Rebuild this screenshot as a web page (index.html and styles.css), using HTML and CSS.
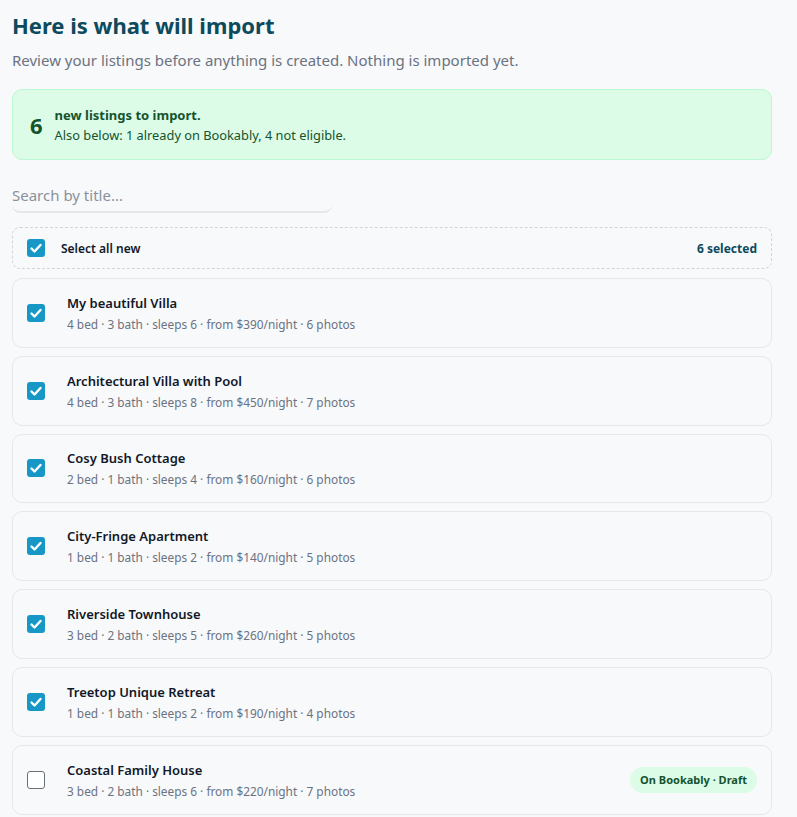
FILE: index.html
```html
<!DOCTYPE html>
<html>
<head>
<meta charset="utf-8">
<link rel="stylesheet" href="styles.css">
</head>
<body>
<main class="page">
  <h1 class="title">Here is what will import</h1>
  <p class="lead">Review your listings before anything is created. Nothing is imported yet.</p>

  <section class="summary">
    <div class="summary-count">6</div>
    <div class="summary-text">
      <div class="summary-main">new listings to import.</div>
      <div class="summary-sub">Also below: 1 already on Bookably, 4 not eligible.</div>
    </div>
  </section>

  <div class="search-wrap">
    <input class="search" type="text" placeholder="Search by title...">
  </div>

  <div class="select-all">
    <span class="cb checked"><svg viewBox="0 0 18 18"><path d="M4.5 9.5l3 3 6-6.5" fill="none" stroke="#fff" stroke-width="2.4" stroke-linecap="round" stroke-linejoin="round"/></svg></span>
    <span class="select-label">Select all new</span>
    <span class="select-count">6 selected</span>
  </div>

  <ul class="list">
    <li class="card">
      <span class="cb checked"><svg viewBox="0 0 18 18"><path d="M4.5 9.5l3 3 6-6.5" fill="none" stroke="#fff" stroke-width="2.4" stroke-linecap="round" stroke-linejoin="round"/></svg></span>
      <div class="info"><div class="name">My beautiful Villa</div><div class="meta">4 bed · 3 bath · sleeps 6 · from $390/night · 6 photos</div></div>
    </li>
    <li class="card">
      <span class="cb checked"><svg viewBox="0 0 18 18"><path d="M4.5 9.5l3 3 6-6.5" fill="none" stroke="#fff" stroke-width="2.4" stroke-linecap="round" stroke-linejoin="round"/></svg></span>
      <div class="info"><div class="name">Architectural Villa with Pool</div><div class="meta">4 bed · 3 bath · sleeps 8 · from $450/night · 7 photos</div></div>
    </li>
    <li class="card">
      <span class="cb checked"><svg viewBox="0 0 18 18"><path d="M4.5 9.5l3 3 6-6.5" fill="none" stroke="#fff" stroke-width="2.4" stroke-linecap="round" stroke-linejoin="round"/></svg></span>
      <div class="info"><div class="name">Cosy Bush Cottage</div><div class="meta">2 bed · 1 bath · sleeps 4 · from $160/night · 6 photos</div></div>
    </li>
    <li class="card">
      <span class="cb checked"><svg viewBox="0 0 18 18"><path d="M4.5 9.5l3 3 6-6.5" fill="none" stroke="#fff" stroke-width="2.4" stroke-linecap="round" stroke-linejoin="round"/></svg></span>
      <div class="info"><div class="name">City-Fringe Apartment</div><div class="meta">1 bed · 1 bath · sleeps 2 · from $140/night · 5 photos</div></div>
    </li>
    <li class="card">
      <span class="cb checked"><svg viewBox="0 0 18 18"><path d="M4.5 9.5l3 3 6-6.5" fill="none" stroke="#fff" stroke-width="2.4" stroke-linecap="round" stroke-linejoin="round"/></svg></span>
      <div class="info"><div class="name">Riverside Townhouse</div><div class="meta">3 bed · 2 bath · sleeps 5 · from $260/night · 5 photos</div></div>
    </li>
    <li class="card">
      <span class="cb checked"><svg viewBox="0 0 18 18"><path d="M4.5 9.5l3 3 6-6.5" fill="none" stroke="#fff" stroke-width="2.4" stroke-linecap="round" stroke-linejoin="round"/></svg></span>
      <div class="info"><div class="name">Treetop Unique Retreat</div><div class="meta">1 bed · 1 bath · sleeps 2 · from $190/night · 4 photos</div></div>
    </li>
    <li class="card">
      <span class="cb"></span>
      <div class="info"><div class="name">Coastal Family House</div><div class="meta">3 bed · 2 bath · sleeps 6 · from $220/night · 7 photos</div></div>
      <span class="badge">On Bookably · Draft</span>
    </li>
  </ul>
</main>
</body>
</html>
```

FILE: styles.css
```css
* { box-sizing: border-box; }
html, body { margin: 0; padding: 0; background: #f8f9fb; }
body {
  font-family: "Noto Sans", "Open Sans", sans-serif;
  color: #111827;
}
.page {
  width: 760px;
  margin: 0 0 0 12px;
  padding-top: 10px;
}
.title {
  margin: 0;
  font-size: 22px;
  line-height: 30px;
  font-weight: 700;
  color: #0c4a5c;
}
.lead {
  margin: 9px 0 0;
  font-size: 15px;
  line-height: 22px;
  color: #6b7280;
}
.summary {
  margin-top: 18px;
  height: 71px;
  display: flex;
  align-items: center;
  gap: 12px;
  padding: 0 17px;
  background: #dcfce7;
  border: 1px solid #bbf7d0;
  border-radius: 10px;
  color: #14532d;
}
.summary-count {
  font-size: 22px;
  font-weight: 700;
  line-height: 1;
}
.summary-main {
  font-size: 13px;
  font-weight: 700;
  line-height: 20px;
}
.summary-sub {
  font-size: 12.8px;
  line-height: 20px;
}
.search-wrap { margin-top: 19px; }
.search {
  display: block;
  width: 320px;
  height: 34px;
  padding: 0;
  border: none;
  border-bottom: 2px solid #e5e7eb;
  border-radius: 8px;
  background: transparent;
  font-family: inherit;
  font-size: 15px;
  color: #111827;
  outline: none;
}
.search::placeholder { color: #8b919b; }
.select-all {
  margin-top: 14px;
  height: 42px;
  display: flex;
  align-items: center;
  padding: 0 14px;
  border: 1px dashed #d1d5db;
  border-radius: 8px;
}
.select-label {
  margin-left: 16px;
  font-size: 12px;
  font-weight: 600;
}
.select-count {
  margin-left: auto;
  font-size: 12px;
  font-weight: 700;
  color: #0c4a5c;
}
.cb {
  flex: none;
  width: 18px;
  height: 18px;
  border: 1px solid #6b6f76;
  border-radius: 3px;
  background: #fff;
  display: flex;
}
.cb.checked {
  border: none;
  background: #1797c6;
}
.cb svg { width: 18px; height: 18px; }
.list {
  list-style: none;
  margin: 9px 0 0;
  padding: 0;
  display: flex;
  flex-direction: column;
  gap: 8px;
}
.card {
  height: 69.8px;
  display: flex;
  align-items: center;
  padding: 0 14px;
  border: 1px solid #e5e7eb;
  border-radius: 10px;
  background: #f8f9fb;
}
.info { margin-left: 22px; }
.name {
  font-size: 13px;
  font-weight: 600;
  line-height: 20px;
  color: #111827;
}
.meta {
  margin-top: 2px;
  font-size: 11.85px;
  line-height: 18px;
  color: #6b7280;
}
.badge {
  margin-left: auto;
  padding: 4px 10px;
  border-radius: 999px;
  background: #dcfce7;
  color: #14532d;
  font-size: 11px;
  font-weight: 700;
  line-height: 18px;
}
```
